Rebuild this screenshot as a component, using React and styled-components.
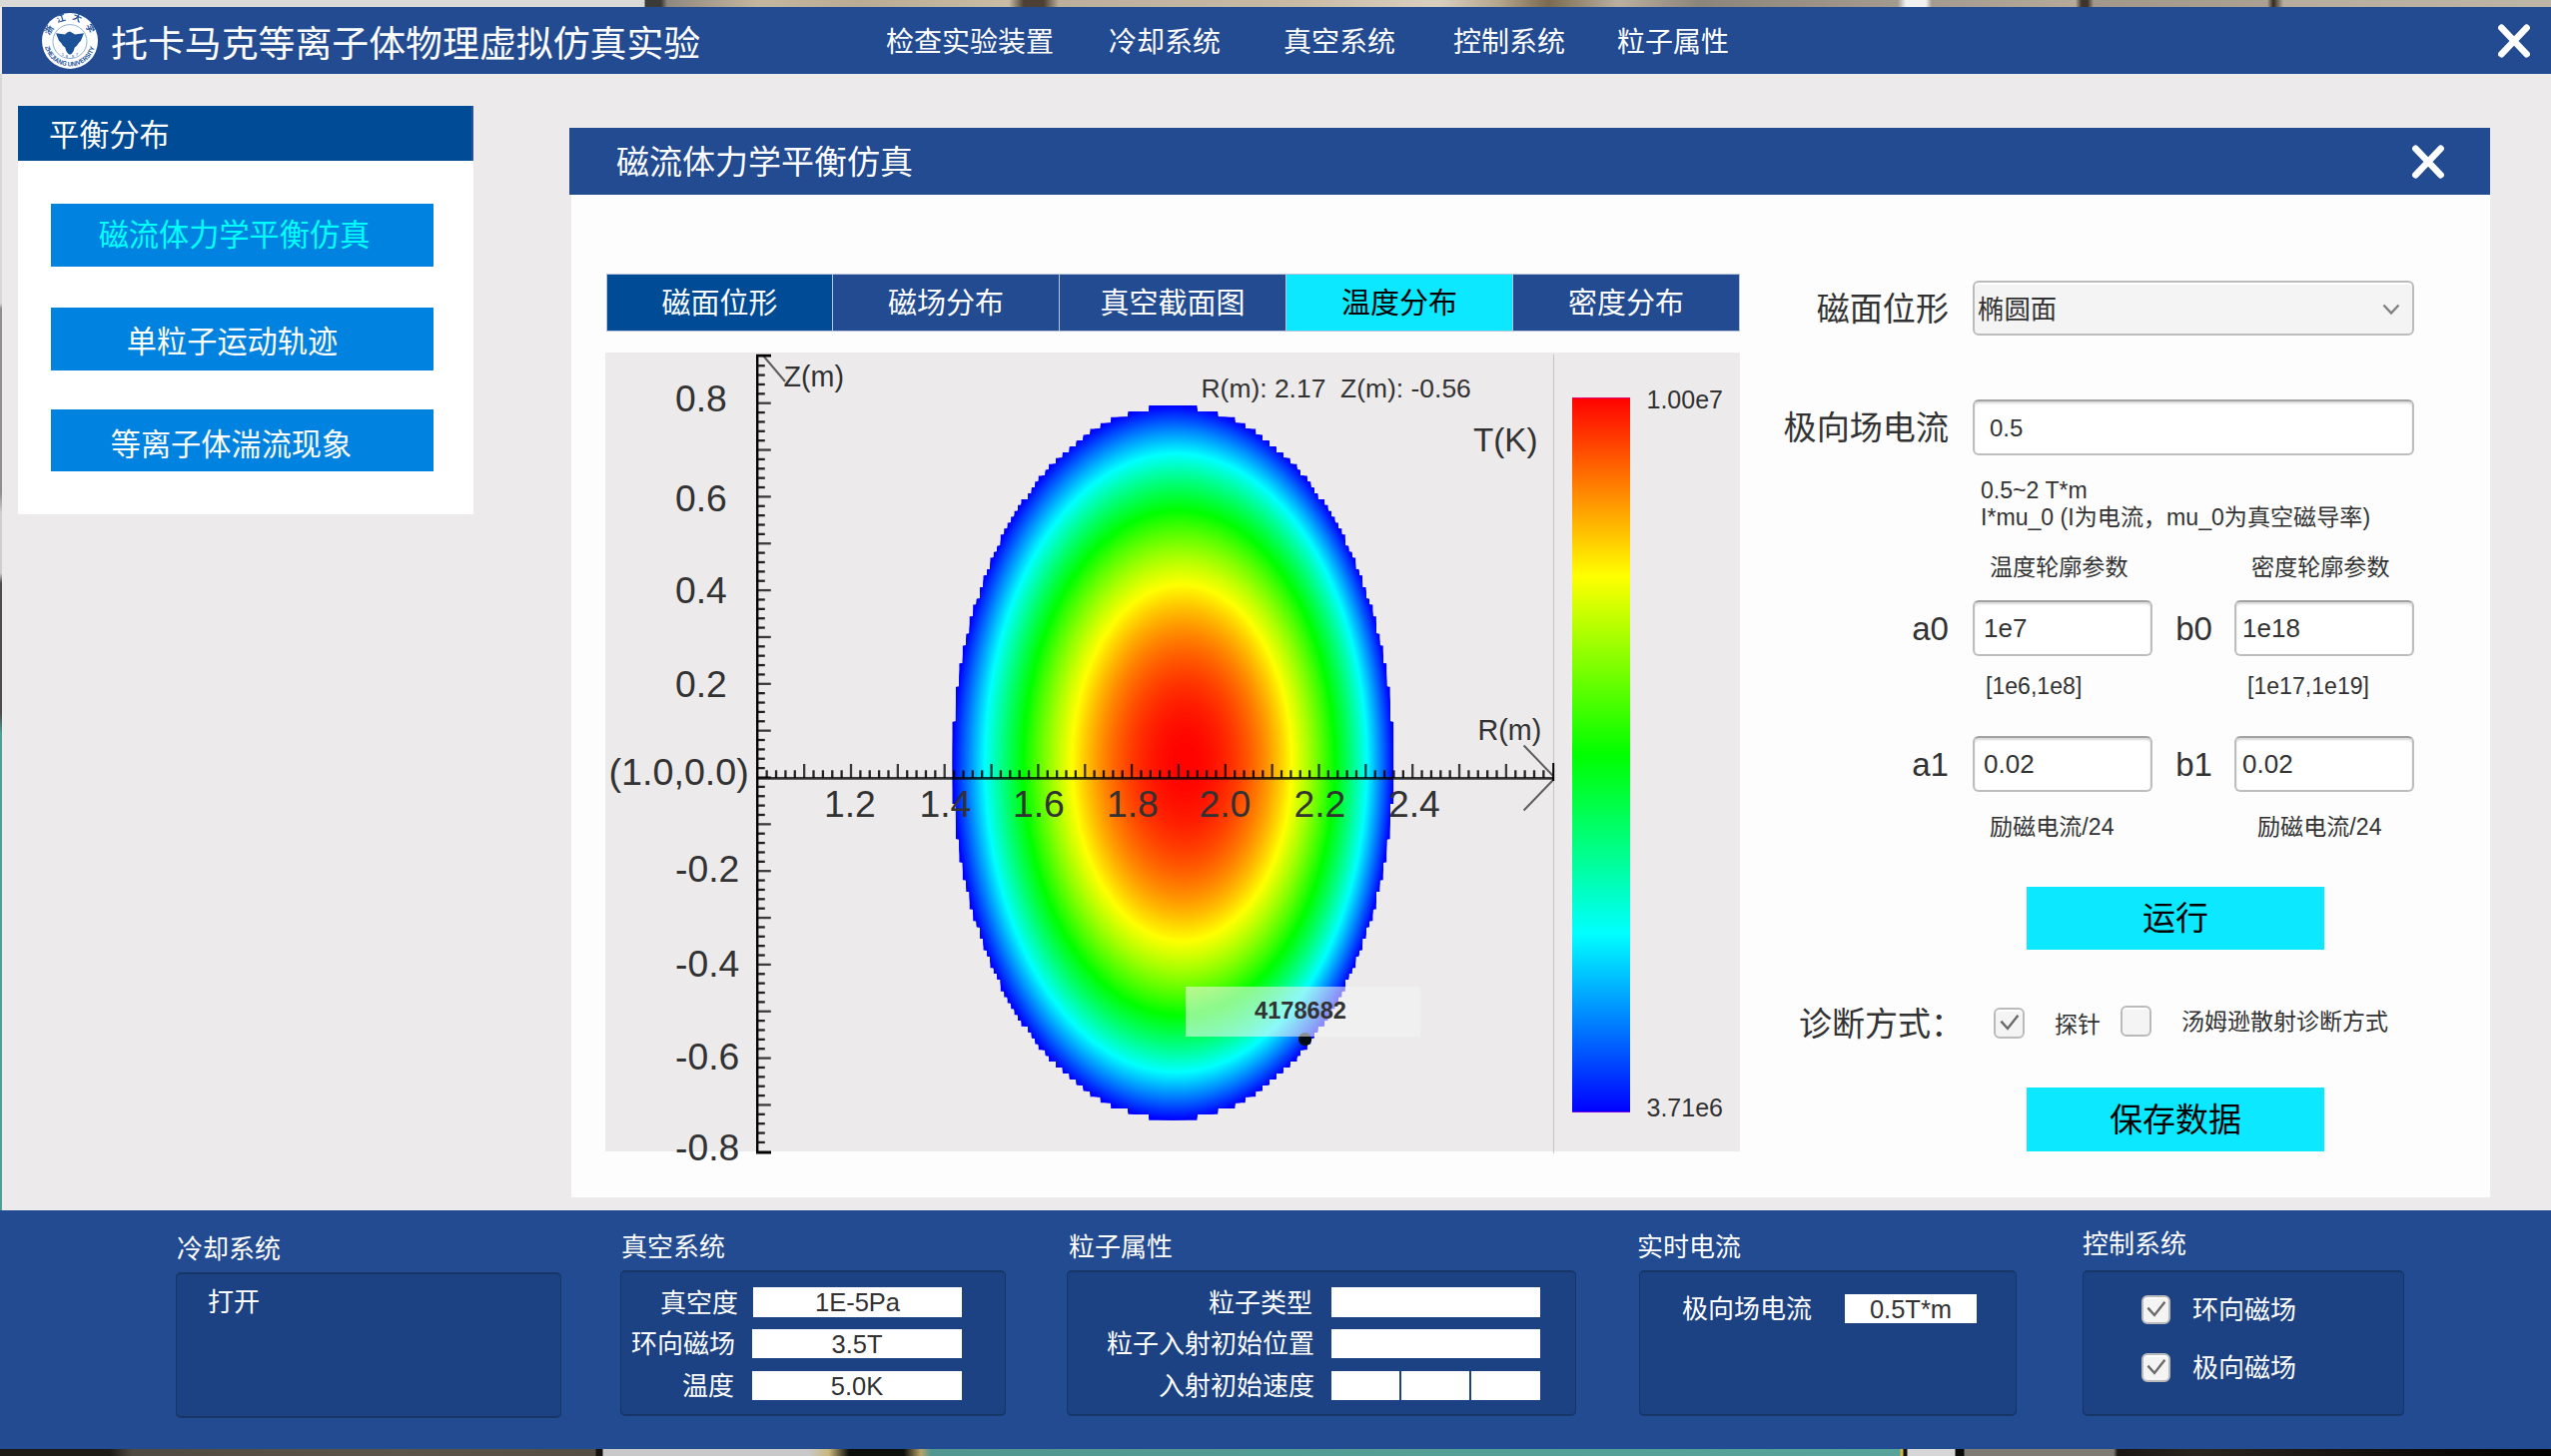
import React from "react";
import styled, { createGlobalStyle } from "styled-components";

const GlobalStyle = createGlobalStyle`
  *, *::before, *::after { box-sizing: border-box; }
  html, body { margin: 0; padding: 0; }
  body {
    font-family: "Liberation Sans", "Noto Sans CJK SC", sans-serif;
    color: #323232;
    overflow: hidden;
  }
  button, input { font-family: inherit; }
`;

const Page = styled.div`
  width: 2554px;
  height: 1458px;
  display: flex;
  flex-direction: column;
  background: #eceaeb;
`;

const TopScene = styled.div`
  height: 7px;
  flex: none;
  background: linear-gradient(
    90deg,
    #dadbd7 0 645px,
    #3c3a37 646px 662px,
    #8f887e 668px,
    #c4b7a0 760px,
    #b9ab94 860px,
    #c9bda6 1010px,
    #4b4033 1025px 1045px,
    #bbae9b 1060px,
    #c8bba6 1300px,
    #d8d0bf 1440px,
    #b5a68e 1500px,
    #7b6a50 1550px,
    #b9b0a0 1620px,
    #8c8579 1700px,
    #a39b8e 1900px,
    #f2f1f2 1908px 1928px,
    #a39b8e 1934px,
    #b3aa9a 2078px,
    #3d352c 2084px 2090px,
    #a0988a 2096px,
    #aaa192 2270px,
    #33291f 2276px,
    #b6ad9e 2286px,
    #bdb5a6 2554px
  );
`;

const BottomScene = styled.div`
  height: 7px;
  flex: none;
  background: linear-gradient(
    90deg,
    #1d1b18 0 110px,
    #4f4a41 132px,
    #5b544a 400px,
    #544d43 596px,
    #15120e 597px 603px,
    #c8c8c8 604px 810px,
    #c9b779 830px,
    #0d0f0d 850px 905px,
    #b9a468 922px,
    #51968f 932px,
    #55a096 1500px,
    #58a399 1902px,
    #d8b640 1903px 1905px,
    #111 1906px 1909px,
    #d6d6d6 1910px 1957px,
    #0b0b0b 1958px 1966px,
    #7f7b74 1967px 2116px,
    #1a1613 2120px,
    #2a241e 2200px,
    #100e0c 2400px,
    #000 2554px
  );
`;

const Header = styled.header`
  height: 67px;
  flex: none;
  margin-left: 2px;
  padding: 0 21px 0 39px;
  display: flex;
  align-items: center;
  background: #234b91;
  color: #fff;
`;

const AppTitle = styled.h1`
  margin: 8px 0 0 12px;
  width: 593px;
  font-size: 36.9px;
  font-weight: 400;
  line-height: 44px;
  white-space: nowrap;
`;

const Nav = styled.nav`
  display: flex;
  margin-left: 183px;
`;

const NavItem = styled.a`
  margin-left: ${(p) => p.$gap}px;
  padding-top: 4px;
  font-size: 28px;
  line-height: 36px;
  white-space: nowrap;
`;

const CloseButton = styled.button`
  width: 32px;
  height: 34px;
  margin-left: auto;
  padding: 0;
  border: 0;
  background: none;
  display: flex;
  svg { display: block; }
`;

const Workspace = styled.main`
  height: 1138px;
  flex: none;
  display: flex;
  align-items: flex-start;
  border-left: 2px solid;
  border-image: linear-gradient(180deg, #d8d8d8 0 230px, #8f8f8f 236px 420px, #cfcfcf 440px 500px, #4c4c4c 510px 640px, #4f9f96 660px) 1;
  padding-left: 16px;
`;

const SidePanel = styled.aside`
  width: 456px;
  height: 409px;
  margin-top: 32px;
  background: #fff;
  display: flex;
  flex-direction: column;
  align-items: flex-start;
`;

const SideHeading = styled.h2`
  width: 456px;
  height: 55px;
  margin: 0 0 43px;
  padding: 3px 0 0 31px;
  background: #004b96;
  border-right: 2px solid #2a5299;
  color: #fff;
  font-size: 30.2px;
  font-weight: 400;
  line-height: 54px;
`;

const SideButton = styled.button`
  width: 383px;
  height: ${(p) => p.$height}px;
  margin: 0 0 ${(p) => p.$after}px 33px;
  padding: ${(p) => p.$drop}px ${(p) => p.$pull}px 0 0;
  border: 0;
  background: #0082e1;
  color: ${(p) => (p.$active ? "#00ffff" : "#fff")};
  font-size: 30.2px;
  line-height: 36px;
  text-align: center;
`;

const Dialog = styled.section`
  width: 1923px;
  margin: 54px 0 0 96px;
  display: flex;
  flex-direction: column;
`;

const DialogHeader = styled.div`
  height: 67px;
  padding: 0 46px 0 47px;
  display: flex;
  align-items: center;
  background: #234b91;
  color: #fff;
`;

const DialogTitle = styled.h2`
  margin: 3px 0 0;
  font-size: 33px;
  font-weight: 400;
  line-height: 44px;
`;

const DialogBody = styled.div`
  height: 1004px;
  margin-left: 2px;
  padding: 79px 0 0 34px;
  background: #fdfdfd;
  display: flex;
  align-items: flex-start;
`;

const PlotColumn = styled.div`
  width: 1136px;
  flex: none;
`;

const Tabs = styled.div`
  display: grid;
  grid-template-columns: 226px 227px 227px 227px 226px;
  width: 1135px;
  margin: 0 0 21px 1px;
  border: 1px solid #b9c3da;
`;

const Tab = styled.button`
  height: 56px;
  padding: 2px 0 0;
  border: 0;
  border-right: ${(p) => (p.$last ? "0" : "1px solid #b9c3da")};
  background: ${(p) => (p.$tone === "active" ? "#0ce8ff" : p.$tone === "visited" ? "#004b96" : "#234b91")};
  color: ${(p) => (p.$tone === "active" ? "#000" : "#fff")};
  font-size: 29px;
  line-height: 34px;
`;

const PlotCanvas = styled.svg`
  display: block;
  width: 1136px;
  height: 824px;
  fill: #323232;
  overflow: visible;
`;

const Form = styled.div`
  width: 660px;
  margin-left: 20px;
  display: flex;
  flex-direction: column;
`;

const FieldRow = styled.div`
  display: flex;
  align-items: center;
  margin-top: ${(p) => p.$top || 0}px;
`;

const FieldLabel = styled.label`
  width: ${(p) => p.$width}px;
  margin-right: ${(p) => p.$gap}px;
  padding-top: 2px;
  display: flex;
  justify-content: flex-end;
  font-size: 33.1px;
  line-height: 44px;
  white-space: nowrap;
`;

const SelectBox = styled.div`
  width: 442px;
  height: 55px;
  padding: 2px 12px 0 3px;
  display: flex;
  align-items: center;
  justify-content: space-between;
  border: 2px solid #bcbcbc;
  border-radius: 6px;
  background: #f4f4f4;
  box-shadow: inset 0 2px 0 #fff;
  font-size: 26.4px;
  line-height: 34px;
`;

const TextInput = styled.input`
  width: ${(p) => p.$width}px;
  height: 56px;
  padding: 2px 0 0 ${(p) => p.$inset}px;
  border: 2px solid #bdbdbd;
  border-top-color: #a3a3a3;
  border-radius: 6px;
  background: #fff;
  box-shadow: inset 0 2px 2px #d9d9d9;
  color: #323232;
  font-size: ${(p) => p.$size}px;
  outline: none;
`;

const Hint = styled.p`
  margin: 22px 0 0 221px;
  font-size: 23.1px;
  line-height: 26.8px;
  white-space: nowrap;
`;

const PairGrid = styled.div`
  display: grid;
  grid-template-columns: 262px 262px;
  margin: ${(p) => p.$top}px 0 0 ${(p) => p.$left}px;
`;

const Caption = styled.span`
  padding-left: ${(p) => p.$inset || 0}px;
  font-size: 23.1px;
  line-height: 30px;
  white-space: nowrap;
`;

const ActionButton = styled.button`
  width: 298px;
  height: ${(p) => p.$height}px;
  margin: ${(p) => p.$top}px 0 0 267px;
  padding: 2px 0 0;
  border: 0;
  background: #0ce8ff;
  color: #000;
  font-size: 33px;
  line-height: 42px;
`;

const Diagnosis = styled.div`
  height: 48px;
  margin: 50px 0 0 39px;
  display: flex;
  align-items: flex-start;
`;

const DiagnosisTitle = styled.span`
  width: 195px;
  padding-top: 3px;
  font-size: 33px;
  line-height: 44px;
  white-space: nowrap;
`;

const CheckFrame = styled.span`
  width: ${(p) => p.$size}px;
  height: ${(p) => p.$size}px;
  flex: none;
  margin: ${(p) => p.$top || 0}px ${(p) => p.$right || 0}px 0 ${(p) => p.$left || 0}px;
  display: flex;
  align-items: center;
  justify-content: center;
  border: 2px solid #bababa;
  border-radius: 6px;
  background: #f4f4f4;
  box-shadow: inset 0 2px 0 #fff;
`;

const CheckLabel = styled.span`
  margin: ${(p) => p.$top}px 0 0 ${(p) => p.$left}px;
  font-size: 23px;
  line-height: 30px;
  white-space: nowrap;
`;

const Footer = styled.footer`
  height: 239px;
  flex: none;
  display: flex;
  align-items: flex-start;
  background: #234b91;
  color: #fff;
`;

const Group = styled.section`
  width: ${(p) => p.$width}px;
  margin: ${(p) => p.$top}px 0 0 ${(p) => p.$left}px;
`;

const GroupTitle = styled.h3`
  margin: 0 0 0 ${(p) => p.$inset}px;
  height: ${(p) => p.$height}px;
  font-size: 26px;
  font-weight: 400;
  line-height: 35px;
`;

const GroupBox = styled.div`
  height: 145px;
  padding: ${(p) => p.$pad};
  display: flex;
  flex-direction: column;
  gap: ${(p) => p.$gap || 0}px;
  border: 1px solid #173668;
  border-top-width: 2px;
  border-radius: 5px;
  background: #1c4283;
  box-shadow: 0 1px 0 #173668;
`;

const StatusRow = styled.div`
  height: ${(p) => p.$height || 30}px;
  display: flex;
  align-items: center;
  justify-content: ${(p) => (p.$start ? "flex-start" : "flex-end")};
`;

const StatusLabel = styled.span`
  margin-right: ${(p) => p.$gap || 0}px;
  padding-top: 1px;
  font-size: 26px;
  line-height: 30px;
  white-space: nowrap;
`;

const StatusValue = styled.span`
  width: ${(p) => p.$width}px;
  height: ${(p) => p.$height || 29}px;
  background: #fff;
  color: #323232;
  font-size: 25.5px;
  line-height: 31px;
  text-align: center;
`;

const VectorValue = styled.span`
  display: grid;
  grid-template-columns: 69px 69px 69px;
  justify-content: space-between;
  width: 209px;
`;

function CrestIcon() {
  return (
    <svg width="58" height="58" viewBox="-29 -29 58 58">
      <defs>
        <path id="crestBottom" d="M-25.4 3 A25.6 25.6 0 0 0 25.4 3" />
        <path id="crestTop" d="M-19.6 -5 A20 20 0 0 1 19.6 -5" />
      </defs>
      <circle r="28" fill="#fff" />
      <circle r="17" cy="0.6" fill="none" stroke="#8fb2d4" strokeWidth="1" />
      <g fill="#1c5298">
        <path d="M-14 -7.8 L-5 -6.4 L-2.6 -8.4 L0 -9.4 L2.6 -8 L5 -6.4 L14 -7.8 L12.2 -3.2 L11 -0.2 L8.8 2 L7 4.8 L4.8 6.4 L3.6 10.2 L1.8 12.8 L0 13.8 L-1.8 12.8 L-3.6 10.2 L-4.8 6.4 L-7 4.8 L-8.8 2 L-11 -0.2 L-12.2 -3.2 Z" />
        <text fontSize="4.2" textAnchor="middle" x="-7" y="14.5">1</text>
        <text fontSize="4.2" textAnchor="middle" x="-3" y="16.6">8</text>
        <text fontSize="4.2" textAnchor="middle" x="3" y="16.6">9</text>
        <text fontSize="4.2" textAnchor="middle" x="7" y="14.5">7</text>
        <text fontSize="6.6" fontWeight="700">
          <textPath href="#crestBottom" startOffset="3" textLength="67" lengthAdjust="spacingAndGlyphs">ZHEJIANG UNIVERSITY</textPath>
        </text>
        <text fontSize="9" fontWeight="700" letterSpacing="5.4">
          <textPath href="#crestTop" startOffset="0">浙江大学</textPath>
        </text>
      </g>
    </svg>
  );
}

function CrossIcon() {
  return (
    <svg width="32" height="34" viewBox="0 0 32 34">
      <path d="M3.4 3.8 L28.6 30.2 M28.6 3.8 L3.4 30.2" stroke="#fff" strokeWidth="6.6" strokeLinecap="round" />
    </svg>
  );
}

function CheckIcon() {
  return (
    <svg width="20" height="18" viewBox="0 0 20 18">
      <path d="M1.4 7.6 L8 15 L18.4 1.8" fill="none" stroke="#6a6a6a" strokeWidth="2.4" />
    </svg>
  );
}

function CheckBox({ checked, ...rest }) {
  return <CheckFrame {...rest}>{checked && <CheckIcon />}</CheckFrame>;
}

/* Plasma cross-section: centre, half axes and cell size of the sampled grid. */
const PLASMA = { cx: 568.3, cy: 410.9, a: 221, b: 357, cellW: 3.45, cellH: 5.866, rows: 61 };

function plasmaOutline() {
  const { cx, cy, a, b, cellW, cellH, rows } = PLASMA;
  const right = [];
  const left = [];
  for (let i = -rows; i < rows; i += 1) {
    const dy = (i + 0.5) * cellH;
    const w = Math.floor((a * Math.sqrt(Math.max(0, 1 - (dy / b) ** 2))) / cellW + 0.4) * cellW;
    const y0 = cy + i * cellH;
    right.push(`${cx + w},${y0} ${cx + w},${y0 + cellH}`);
    left.unshift(`${cx - w},${y0 + cellH} ${cx - w},${y0}`);
  }
  return [...right, ...left].join(" ");
}

function hueColor(t) {
  const h = t * 4;
  const f = h - Math.floor(h);
  const up = Math.round(255 * f);
  const down = 255 - up;
  if (h < 1) return `rgb(255,${up},0)`;
  if (h < 2) return `rgb(${down},255,0)`;
  if (h < 3) return `rgb(0,255,${up})`;
  if (h < 4) return `rgb(0,${down},255)`;
  return "rgb(0,0,255)";
}

const LEVELS = 300;
const contours = Array.from({ length: LEVELS }, (_, k) => {
  const t = 1 - k / LEVELS;
  return { t, r: Math.sqrt(t) };
});

const zLabels = [
  ["0.8", 59], ["0.6", 159], ["0.4", 251], ["0.2", 344.5],
  ["-0.2", 530], ["-0.4", 624.5], ["-0.6", 718], ["-0.8", 808.5],
];
const rLabels = [
  ["1.2", 219], ["1.4", 314.5], ["1.6", 408], ["1.8", 502], ["2.0", 594.5], ["2.2", 689.5], ["2.4", 784],
];

function TemperaturePlot() {
  const step = 46.85 / 5;
  const zTicks = Array.from({ length: 84 }, (_, i) => i + 1);
  const rTicks = Array.from({ length: 84 }, (_, i) => i + 1);
  return (
    <PlotCanvas viewBox="0 0 1136 824">
      <defs>
        <clipPath id="plasma"><polygon points={plasmaOutline()} /></clipPath>
        <linearGradient id="scale" x1="0" y1="0" x2="0" y2="1">
          <stop offset="0" stopColor="#f00" />
          <stop offset="0.25" stopColor="#ff0" />
          <stop offset="0.5" stopColor="#0f0" />
          <stop offset="0.75" stopColor="#0ff" />
          <stop offset="1" stopColor="#00f" />
        </linearGradient>
      </defs>
      <rect width="1136" height="800" fill="#eceaeb" />
      <g clipPath="url(#plasma)">
        <rect x="340" y="50" width="460" height="725" fill="#00f" />
        {contours.map(({ t, r }) => (
          <ellipse key={t} cx={PLASMA.cx + 12 * (1 - t)} cy={PLASMA.cy} rx={221 * r} ry={358 * r} fill={hueColor(t)} />
        ))}
      </g>

      <rect x="949" y="2" width="1" height="800" fill="#c4c4c4" />

      <g stroke="#000">
        <path d="M152.2 2 V802" strokeWidth="2.4" />
        <path d="M151 426.3 H950" strokeWidth="2.8" strokeOpacity="0.78" />
        <path d="M151 3.2 H166 M151 801 H166" strokeWidth="2.8" />
        <path d="M949.2 411 V429" strokeWidth="2" />
        {zTicks.map((i) => {
          const major = i % 5 === 0;
          const y = 3.85 + i * step;
          return <path key={i} d={`M152 ${y} H${major ? 165.8 : 159.8}`} strokeWidth="2.3" strokeOpacity={major ? 0.75 : 0.85} />;
        })}
        {rTicks.map((i) => {
          const major = i % 5 === 0;
          const x = 152.3 + i * step;
          return <path key={i} d={`M${x} 426 V${major ? 412 : 418.3}`} strokeWidth="2.3" strokeOpacity={major ? 0.75 : 0.85} />;
        })}
        <path d="M158 3 L180 29 M919.6 393.5 L949 424 M949 428 L919.6 458.5" fill="none" strokeOpacity="0.6" strokeWidth="2" />
      </g>

      <g fontSize="37.3">
        {zLabels.map(([text, y]) => <text key={text} x="70" y={y}>{text}</text>)}
        <text x="3.5" y="433" fontSize="37.7">(1.0,0.0)</text>
        {rLabels.map(([text, x]) => <text key={text} x={x} y="465">{text}</text>)}
      </g>
      <text x="178.5" y="34" fontSize="28.7">Z(m)</text>
      <text x="873.5" y="388" fontSize="28.7">R(m)</text>
      <text x="869" y="99.3" fontSize="33.2">T(K)</text>
      <text x="596.5" y="44.7" fontSize="26.45" style={{ whiteSpace: "pre" }}>R(m): 2.17  Z(m): -0.56</text>

      <rect x="968" y="45" width="58" height="716" fill="url(#scale)" />
      <rect x="968" y="45" width="58" height="1" fill="#e6006e" />
      <rect x="968" y="760" width="58" height="1" fill="#7a00e0" />
      <text x="1042.5" y="56" fontSize="25">1.00e7</text>
      <text x="1042.5" y="765" fontSize="25">3.71e6</text>

      <circle cx="700.6" cy="687.6" r="6.6" fill="#000a12" />
      <rect x="581" y="635" width="235" height="50" fill="#f5f5f5" fillOpacity="0.57" />
      <text x="696" y="667" fontSize="23.6" fontWeight="700" textAnchor="middle">4178682</text>
    </PlotCanvas>
  );
}

function ParamRow({ top, left, right, values, insets }) {
  return (
    <FieldRow $top={top}>
      <FieldLabel $width={189} $gap={24}>{left}</FieldLabel>
      <TextInput $width={180} $inset={insets[0]} $size={26} defaultValue={values[0]} />
      <FieldLabel $width={60} $gap={22}>{right}</FieldLabel>
      <TextInput $width={180} $inset={insets[1]} $size={26} defaultValue={values[1]} />
    </FieldRow>
  );
}

const navItems = [
  ["检查实验装置", 0], ["冷却系统", 55], ["真空系统", 63], ["控制系统", 58], ["粒子属性", 52],
];

const tabs = [
  ["磁面位形", "visited"], ["磁场分布", "idle"], ["真空截面图", "idle"], ["温度分布", "active"], ["密度分布", "idle"],
];

export default function App() {
  return (
    <>
      <GlobalStyle />
      <Page>
        <TopScene />
        <Header>
          <CrestIcon />
          <AppTitle>托卡马克等离子体物理虚拟仿真实验</AppTitle>
          <Nav>
            {navItems.map(([text, gap]) => <NavItem key={text} $gap={gap}>{text}</NavItem>)}
          </Nav>
          <CloseButton aria-label="close"><CrossIcon /></CloseButton>
        </Header>

        <Workspace>
          <SidePanel>
            <SideHeading>平衡分布</SideHeading>
            <SideButton $active $height={63} $after={41} $drop={0} $pull={16}>磁流体力学平衡仿真</SideButton>
            <SideButton $height={63} $after={39} $drop={7} $pull={20}>单粒子运动轨迹</SideButton>
            <SideButton $height={62} $after={0} $drop={10} $pull={22}>等离子体湍流现象</SideButton>
          </SidePanel>

          <Dialog>
            <DialogHeader>
              <DialogTitle>磁流体力学平衡仿真</DialogTitle>
              <CloseButton aria-label="close"><CrossIcon /></CloseButton>
            </DialogHeader>
            <DialogBody>
              <PlotColumn>
                <Tabs>
                  {tabs.map(([text, tone], i) => <Tab key={text} $tone={tone} $last={i === 4}>{text}</Tab>)}
                </Tabs>
                <TemperaturePlot />
              </PlotColumn>

              <Form>
                <FieldRow $top={7}>
                  <FieldLabel $width={189} $gap={24}>磁面位形</FieldLabel>
                  <SelectBox>
                    椭圆面
                    <svg width="18" height="12" viewBox="0 0 18 12">
                      <path d="M1.5 1.5 L9 9.5 L16.5 1.5" fill="none" stroke="#808080" strokeWidth="2.4" />
                    </svg>
                  </SelectBox>
                </FieldRow>
                <FieldRow $top={64}>
                  <FieldLabel $width={189} $gap={24}>极向场电流</FieldLabel>
                  <TextInput $width={442} $inset={15} $size={24} defaultValue="0.5" />
                </FieldRow>
                <Hint>0.5~2 T*m<br />I*mu_0 (I为电流，mu_0为真空磁导率)</Hint>
                <PairGrid $top={21} $left={230}>
                  <Caption>温度轮廓参数</Caption>
                  <Caption>密度轮廓参数</Caption>
                </PairGrid>
                <ParamRow top={18} left="a0" right="b0" values={["1e7", "1e18"]} insets={[9, 6]} />
                <PairGrid $top={15} $left={226}>
                  <Caption>[1e6,1e8]</Caption>
                  <Caption>[1e17,1e19]</Caption>
                </PairGrid>
                <ParamRow top={35} left="a1" right="b1" values={["0.02", "0.02"]} insets={[9, 6]} />
                <PairGrid $top={20} $left={230}>
                  <Caption>励磁电流/24</Caption>
                  <Caption $inset={6}>励磁电流/24</Caption>
                </PairGrid>
                <ActionButton $height={63} $top={45}>运行</ActionButton>
                <Diagnosis>
                  <DiagnosisTitle>诊断方式：</DiagnosisTitle>
                  <CheckBox checked $size={31} $top={8} />
                  <CheckLabel $top={10} $left={30}>探针</CheckLabel>
                  <CheckBox $size={31} $top={6} $left={20} />
                  <CheckLabel $top={7} $left={30}>汤姆逊散射诊断方式</CheckLabel>
                </Diagnosis>
                <ActionButton $height={64} $top={40}>保存数据</ActionButton>
              </Form>
            </DialogBody>
          </Dialog>
        </Workspace>

        <Footer>
          <Group $width={386} $top={22} $left={176}>
            <GroupTitle $height={40} $inset={1}>冷却系统</GroupTitle>
            <GroupBox $pad="11px 0 0 31px">
              <StatusRow $start $height={32}><StatusLabel>打开</StatusLabel></StatusRow>
            </GroupBox>
          </Group>
          <Group $width={386} $top={20} $left={59}>
            <GroupTitle $height={40} $inset={1}>真空系统</GroupTitle>
            <GroupBox $pad="15px 43px 0 0" $gap={11.5}>
              <StatusRow>
                <StatusLabel $gap={15}>真空度</StatusLabel>
                <StatusValue $width={209} $height={30}>1E-5Pa</StatusValue>
              </StatusRow>
              <StatusRow>
                <StatusLabel $gap={17}>环向磁场</StatusLabel>
                <StatusValue $width={210}>3.5T</StatusValue>
              </StatusRow>
              <StatusRow>
                <StatusLabel $gap={18}>温度</StatusLabel>
                <StatusValue $width={210}>5.0K</StatusValue>
              </StatusRow>
            </GroupBox>
          </Group>
          <Group $width={510} $top={20} $left={61}>
            <GroupTitle $height={40} $inset={2}>粒子属性</GroupTitle>
            <GroupBox $pad="15px 35px 0 0" $gap={11.5}>
              <StatusRow>
                <StatusLabel $gap={19}>粒子类型</StatusLabel>
                <StatusValue $width={209} $height={30} />
              </StatusRow>
              <StatusRow>
                <StatusLabel $gap={17}>粒子入射初始位置</StatusLabel>
                <StatusValue $width={209} />
              </StatusRow>
              <StatusRow>
                <StatusLabel $gap={17}>入射初始速度</StatusLabel>
                <VectorValue>
                  <StatusValue $width={68} />
                  <StatusValue $width={68} />
                  <StatusValue $width={69} />
                </VectorValue>
              </StatusRow>
            </GroupBox>
          </Group>
          <Group $width={378} $top={20} $left={63}>
            <GroupTitle $height={40} $inset={-2}>实时电流</GroupTitle>
            <GroupBox $pad="21px 39px 0 0">
              <StatusRow>
                <StatusLabel $gap={33}>极向场电流</StatusLabel>
                <StatusValue $width={132}>0.5T*m</StatusValue>
              </StatusRow>
            </GroupBox>
          </Group>
          <Group $width={322} $top={17} $left={66}>
            <GroupTitle $height={43} $inset={0}>控制系统</GroupTitle>
            <GroupBox $pad="22px 0 0 58px" $gap={28}>
              <StatusRow $start>
                <CheckBox checked $size={29} $right={22} />
                <StatusLabel>环向磁场</StatusLabel>
              </StatusRow>
              <StatusRow $start>
                <CheckBox checked $size={29} $right={22} />
                <StatusLabel>极向磁场</StatusLabel>
              </StatusRow>
            </GroupBox>
          </Group>
        </Footer>
        <BottomScene />
      </Page>
    </>
  );
}
